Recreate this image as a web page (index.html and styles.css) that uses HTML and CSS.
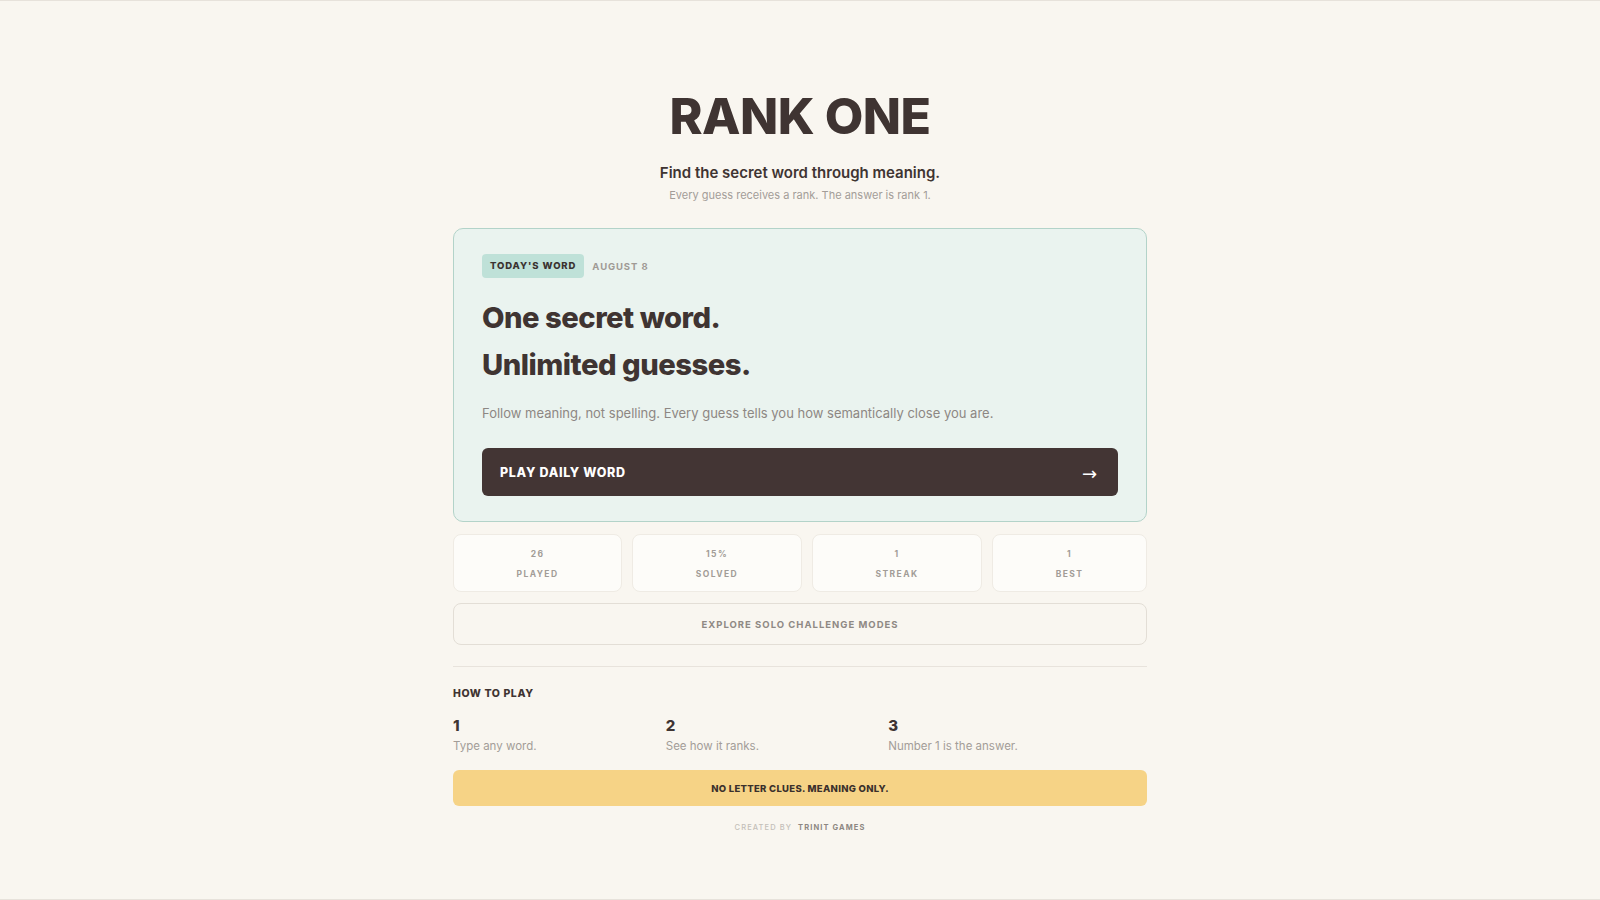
FILE: index.html
```html
<!DOCTYPE html>
<html lang="en">
<head>
<meta charset="utf-8">
<title>Rank One</title>
<link rel="stylesheet" href="styles.css">
</head>
<body>
<div class="page">
  <main class="wrap">
    <header class="hero">
      <h1 class="title">RANK ONE</h1>
      <p class="tagline">Find the secret word through meaning.</p>
      <p class="subline">Every guess receives a rank. The answer is rank 1.</p>
    </header>

    <section class="card">
      <div class="meta">
        <span class="badge">TODAY'S WORD</span>
        <span class="date">AUGUST 8</span>
      </div>
      <h2 class="headline">
        <span class="line">One secret word.</span>
        <span class="line">Unlimited guesses.</span>
      </h2>
      <p class="lead">Follow meaning, not spelling. Every guess tells you how semantically close you are.</p>
      <button class="play" type="button">
        <span class="play-label">PLAY DAILY WORD</span>
        <span class="play-arrow">&rarr;</span>
      </button>
    </section>

    <div class="stats">
      <div class="stat"><span class="stat-num">26</span><span class="stat-label">PLAYED</span></div>
      <div class="stat"><span class="stat-num">15%</span><span class="stat-label">SOLVED</span></div>
      <div class="stat"><span class="stat-num">1</span><span class="stat-label">STREAK</span></div>
      <div class="stat"><span class="stat-num">1</span><span class="stat-label">BEST</span></div>
    </div>

    <button class="explore" type="button">EXPLORE SOLO CHALLENGE MODES</button>

    <hr class="divider">

    <section class="how">
      <h3 class="how-title">HOW TO PLAY</h3>
      <div class="steps">
        <div class="step"><span class="step-num">1</span><span class="step-text">Type any word.</span></div>
        <div class="step"><span class="step-num">2</span><span class="step-text">See how it ranks.</span></div>
        <div class="step"><span class="step-num">3</span><span class="step-text">Number 1 is the answer.</span></div>
      </div>
    </section>

    <div class="banner">NO LETTER CLUES. MEANING ONLY.</div>

    <footer class="credit">
      <span class="credit-by">CREATED BY</span>
      <span class="credit-name">TRINIT GAMES</span>
    </footer>
  </main>
</div>
</body>
</html>
```

FILE: styles.css
```css
* { box-sizing: border-box; }

html, body {
  margin: 0;
  padding: 0;
  background: #f9f6f0;
}

body {
  font-family: "Inter", "Noto Sans", "DejaVu Sans", sans-serif;
  color: #3f3432;
}

.page {
  height: 900px;
  border-top: 1px solid #e7e2db;
  border-bottom: 1px solid #e7e2db;
  overflow: hidden;
}

.wrap {
  width: 694px;
  margin: 0 auto;
  padding-top: 87px;
  display: flex;
  flex-direction: column;
}

/* Hero */
.hero {
  display: flex;
  flex-direction: column;
  align-items: center;
  text-align: center;
}

.title {
  margin: 0;
  font-size: 50px;
  line-height: 56px;
  font-weight: 800;
  letter-spacing: -0.5px;
  color: #3f3432;
}

.tagline {
  margin: 18px 0 0;
  font-size: 15px;
  line-height: 22px;
  font-weight: 600;
  color: #3f3432;
}

.subline {
  margin: 2px 0 0;
  font-size: 11px;
  line-height: 18px;
  font-weight: 400;
  color: #a39d98;
}

/* Card */
.card {
  margin-top: 24px;
  background: #eaf3ef;
  border: 1px solid #b3d3c9;
  border-radius: 10px;
  padding: 25px 28px 25px;
  display: flex;
  flex-direction: column;
}

.meta {
  display: flex;
  align-items: center;
  gap: 8px;
}

.badge {
  display: inline-block;
  height: 24px;
  line-height: 24px;
  padding: 0 8px;
  border-radius: 4px;
  background: #bfe1d8;
  font-size: 9.5px;
  font-weight: 800;
  letter-spacing: 0.9px;
  color: #3a3230;
}

.date {
  font-size: 9.5px;
  font-weight: 700;
  letter-spacing: 0.9px;
  color: #a09a95;
}

.headline {
  margin: 16px 0 0;
  display: flex;
  flex-direction: column;
  font-size: 29.2px;
  line-height: 47px;
  font-weight: 800;
  letter-spacing: -0.5px;
  color: #3f3432;
}

.lead {
  margin: 15px 0 0;
  font-size: 13px;
  line-height: 20px;
  font-weight: 400;
  color: #8d8783;
}

.play {
  margin-top: 25px;
  height: 48px;
  width: 100%;
  border: 0;
  border-radius: 6px;
  background: #433534;
  color: #ffffff;
  font-family: inherit;
  display: flex;
  align-items: center;
  justify-content: space-between;
  padding: 0 21px 0 18px;
  cursor: pointer;
}

.play-label {
  font-size: 12.5px;
  font-weight: 800;
  letter-spacing: 0.7px;
}

.play-arrow {
  font-size: 18px;
  line-height: 1;
  margin-top: 4px;
  font-family: "DejaVu Sans", sans-serif;
}

/* Stats */
.stats {
  margin-top: 12px;
  display: grid;
  grid-template-columns: 169fr 170fr 170fr 155fr;
  gap: 10px;
}

.stat {
  height: 58px;
  background: #fdfcf9;
  border: 1px solid #efebe4;
  border-radius: 8px;
  display: flex;
  flex-direction: column;
  align-items: center;
  justify-content: center;
  gap: 9px;
  padding-top: 2px;
}

.stat-num,
.stat-label {
  font-size: 8.5px;
  line-height: 11px;
  font-weight: 700;
  letter-spacing: 1.4px;
  color: #a29c97;
}

/* Explore */
.explore {
  margin-top: 11px;
  height: 42px;
  width: 100%;
  background: #f9f6f0;
  border: 1px solid #e3ded6;
  border-radius: 8px;
  font-family: inherit;
  font-size: 9.5px;
  font-weight: 700;
  letter-spacing: 1px;
  color: #8f8984;
  cursor: pointer;
}

.divider {
  margin: 21px 0 0;
  border: 0;
  height: 1px;
  background: #e8e3dc;
}

/* How to play */
.how {
  display: flex;
  flex-direction: column;
}

.how-title {
  margin: 19px 0 0;
  font-size: 10.5px;
  line-height: 16px;
  font-weight: 800;
  letter-spacing: 0.6px;
  color: #3f3432;
}

.steps {
  margin-top: 15px;
  display: flex;
}

.step {
  flex: 1 1 auto;
  display: flex;
  flex-direction: column;
}

.step-num {
  font-size: 15px;
  line-height: 18px;
  font-weight: 800;
  color: #3f3432;
}

.step-text {
  margin-top: 2px;
  font-size: 11.5px;
  line-height: 18px;
  color: #a39d98;
}

/* Banner */
.banner {
  margin-top: 15px;
  height: 36px;
  border-radius: 6px;
  background: #f6d386;
  display: flex;
  align-items: center;
  justify-content: center;
  font-size: 9.5px;
  font-weight: 800;
  letter-spacing: 0.3px;
  color: #3a302c;
}

/* Footer */
.credit {
  margin-top: 16px;
  display: flex;
  justify-content: center;
  gap: 6px;
  font-size: 7.5px;
  line-height: 12px;
  letter-spacing: 1.1px;
}

.credit-by {
  color: #c4bfb9;
  font-weight: 500;
}

.credit-name {
  color: #8d8782;
  font-weight: 700;
}
```
